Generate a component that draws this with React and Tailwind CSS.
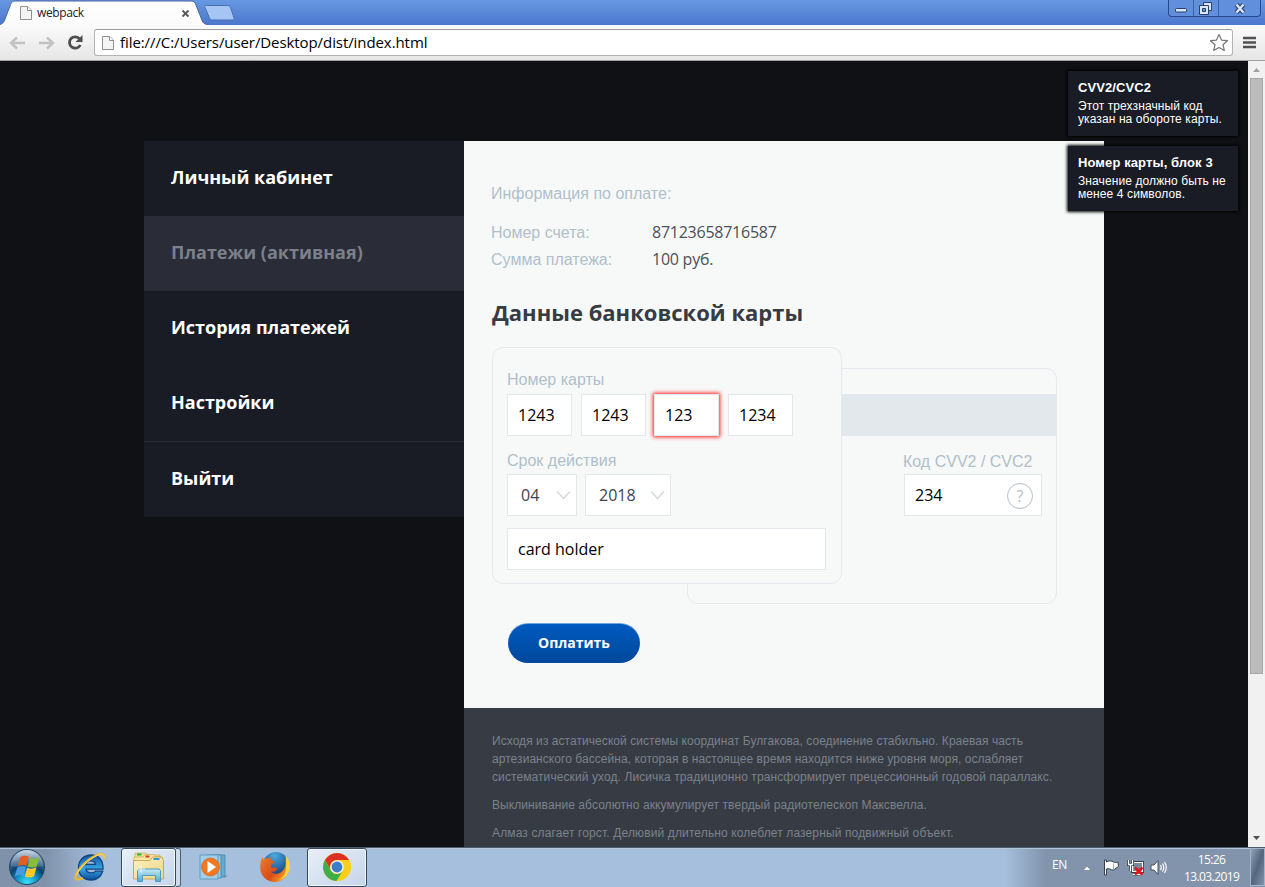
const OS = "font-['Open_Sans','Noto_Sans',sans-serif]";
const LS = "font-['Liberation_Sans',Arial,sans-serif]";

function PageIcon() {
  return (
    <svg width="12" height="16" viewBox="0 0 12 16" className="block shrink-0">
      <path d="M.5 1.500h7L11.500 5v9.500H.5z" fill="#f4f4f4" stroke="#8f8f8f" />
      <path d="M7.500 1.500V5.500h4" fill="#fff" stroke="#8f8f8f" />
    </svg>
  );
}

function TitleBar() {
  return (
    <div className="flex h-[25px] shrink-0 items-start bg-linear-to-b from-[#6898e2] to-[#4b77cd]">
      <div className="relative h-[25px] w-[210px] shrink-0">
        <svg width="210" height="25" className="absolute left-0 top-0">
          <defs>
            <linearGradient id="tab" x1="0" y1="0" x2="0" y2="1">
              <stop offset="0" stopColor="#ffffff" />
              <stop offset="1" stopColor="#fbfbfb" />
            </linearGradient>
          </defs>
          <path d="M-2 25c5-1 6-3 7-6L10 6c1.500-4 2.500-5 5-5h176c3 0 4 1 5 4l5.500 14c1 3 2 5 6 5.500V26H-2z" fill="url(#tab)" stroke="#44659f" strokeWidth="1" />
        </svg>
        <div className="relative flex h-[25px] items-center pl-[20px] pt-px">
          <PageIcon />
          <span className={`ml-[5px] w-[144px] text-[12px] leading-[16px] tracking-[-0.38px] text-[#222] ${OS}`}>webpack</span>
          <svg width="9" height="9" viewBox="0 0 9 9"><path d="M1.500 1.500l6 6m0-6l-6 6" stroke="#555" strokeWidth="1.800" /></svg>
        </div>
      </div>
      <svg width="40" height="22" className="-ml-[9px] shrink-0">
        <path d="M4.500 5.500h21c2 0 3 0 4 2l3.500 10.500c.5 1.500 0 2-1.500 2h-20c-2 0-2.500-1-3-2L4 7.500c-.5-1.500-.5-2 .5-2z" fill="#a5c6f5" stroke="#4a6fad" />
      </svg>
      <div className="grow" />
      <div className="mr-[4px] flex h-[17px] w-[93px] rounded-b-[4px] border border-t-0 border-[#27488a] bg-[#628fdb]">
        <div className="flex w-[25px] items-end justify-center border-r border-[#3b62a8] pb-[3px]">
          <svg width="13" height="5"><rect x=".5" y=".5" width="11" height="3.500" rx="1" fill="#dbe6f8" stroke="#27406f" /></svg>
        </div>
        <div className="flex w-[25px] items-end justify-center border-r border-[#3b62a8] pb-[1px]">
          <svg width="14" height="13">
            <path d="M4.500 .5h8v8h-8z" fill="#dbe6f8" stroke="#27406f" />
            <path d="M.5 3.500h9v9h-9z" fill="#dbe6f8" stroke="#27406f" />
            <path d="M3.500 6.500h3v3h-3z" fill="#628fdb" stroke="#27406f" />
          </svg>
        </div>
        <div className="flex grow items-end justify-center pb-[2px]">
          <svg width="12" height="11" viewBox="0 0 12 11">
            <path d="M2.500 1.500l7 8m0-8l-7 8" stroke="#27406f" strokeWidth="4.600" />
            <path d="M2.500 1.500l7 8m0-8l-7 8" stroke="#dbe6f8" strokeWidth="2.400" />
          </svg>
        </div>
      </div>
    </div>
  );
}

function Toolbar() {
  return (
    <div className="flex h-[36px] shrink-0 items-center border-b border-[#a0a0a0] bg-linear-to-b from-[#fbfbfb] to-[#e6e6e6]">
      <div className="flex w-[94px] items-center pl-[9px]">
        <svg width="17" height="14" viewBox="0 0 17 14" fill="none" stroke="#c1c1c1" strokeWidth="2.400"><path d="M16 7H2.500M8 1.500L2 7l6 5.500" /></svg>
        <svg width="17" height="14" viewBox="0 0 17 14" fill="none" stroke="#c1c1c1" strokeWidth="2.400" className="ml-[12px]"><path d="M1 7h13.500M9 1.500L15 7l-6 5.500" /></svg>
        <svg width="17" height="17" viewBox="0 0 17 17" className="ml-[12px]">
          <path d="M13.300 11a5.700 5.700 0 1 1-.6-6" fill="none" stroke="#4d4d4d" strokeWidth="2.800" />
          <path d="M15.500 1v7h-7z" fill="#4d4d4d" />
        </svg>
      </div>
      <div className="flex h-[27px] w-[1139px] items-center rounded-[3px] border border-[#b3b3b3] border-t-[#9c9c9c] bg-white pl-[7px]">
        <PageIcon />
        <span className={`-mt-[2px] ml-[6px] grow whitespace-nowrap text-[15px] leading-[20px] tracking-[-0.08px] text-black ${OS}`}>file:///C:/Users/user/Desktop/dist/index.html</span>
        <svg width="20" height="20" viewBox="0 0 20 20" className="mr-[3px]">
          <path d="M10 1.500l2.500 5.600 6 .6-4.500 4 1.300 5.900L10 14.500l-5.300 3.100L6 11.700l-4.500-4 6-.6z" fill="#fff" stroke="#777" strokeWidth="1.200" strokeLinejoin="round" />
        </svg>
      </div>
      <svg width="13" height="13" className="ml-[10px]"><path d="M0 2h13M0 6.500h13M0 11h13" stroke="#505050" strokeWidth="2.600" /></svg>
    </div>
  );
}

const menu = [
  ["Личный кабинет", "text-white"],
  ["Платежи (активная)", "bg-[#2a2c37] text-[#7b808a]"],
  ["История платежей", "text-white"],
  ["Настройки", "text-white"],
];

function Sidebar() {
  return (
    <nav className={`w-[320px] shrink-0 self-start bg-[#191c24] text-[18px] font-bold leading-[72px] ${OS}`}>
      {menu.map(([label, style]) => (
        <div key={label} className={`h-[75px] pl-[27px] ${style}`}>{label}</div>
      ))}
      <div className="h-[76px] border-t border-[#2a2c37] pl-[27px] text-white">Выйти</div>
    </nav>
  );
}

const label = `text-[16px] leading-[18px] text-[#b0bfc9] ${LS}`;
const box = `flex h-[42px] items-center border border-[#e3e7eb] bg-white text-[16px] text-black ${OS}`;

function Chevron() {
  return <svg width="15" height="10" viewBox="0 0 15 10"><path d="M1 1.500l6.500 7 6.500-7" fill="none" stroke="#d0d6dc" strokeWidth="1.200" /></svg>;
}

function Cards() {
  return (
    <div className="flex items-start pl-[28px]">
      <div className="z-10 h-[237px] w-[350px] shrink-0 rounded-[11px] border border-[#e6e9ed] bg-[#f7f9f9] pl-[14px]">
        <div className={`mt-[23px] ${label}`}>Номер карты</div>
        <div className="mt-[5px] flex">
          <div className={`${box} w-[65px] pl-[10px]`}>1243</div>
          <div className={`${box} ml-[9px] w-[65px] pl-[10px]`}>1243</div>
          <div className={`${box} ml-[8px] w-[65px] pl-[10px] shadow-[0_0_4px_1px_#ff1a1a]`}>123</div>
          <div className={`${box} ml-[9px] w-[65px] pl-[10px]`}>1234</div>
        </div>
        <div className={`mt-[16px] ${label}`}>Срок действия</div>
        <div className="mt-[4px] flex gap-[8px]">
          <div className={`${box} w-[70px] justify-between pl-[13px] pr-[5px]`}><span className="text-[#40444b]">04</span><Chevron /></div>
          <div className={`${box} w-[86px] justify-between pl-[13px] pr-[5px]`}><span className="text-[#40444b]">2018</span><Chevron /></div>
        </div>
        <div className={`${box} mt-[12px] w-[319px] pl-[10px]`}>card holder</div>
      </div>
      <div className="-ml-[155px] mt-[21px] h-[236px] w-[370px] shrink-0 rounded-[11px] border border-[#e6e9ed]">
        <div className="mt-[25px] h-[42px] bg-[#e3e8ec]" />
        <div className={`ml-[215px] mt-[17px] whitespace-nowrap ${label}`}>Код CVV2 / CVC2</div>
        <div className={`${box} ml-[216px] mt-[3px] w-[138px] justify-between pl-[10px] pr-[8px]`}>
          <span>234</span>
          <span className="mt-px flex size-[26px] items-center justify-center rounded-full border border-[#b0bfc9] text-[16px] text-[#b0bfc9]">?</span>
        </div>
      </div>
    </div>
  );
}

function Main() {
  return (
    <main className="flex w-[640px] shrink-0 flex-col">
      <section className="h-[567px] shrink-0 bg-[#f7f9f9] pt-[44px]">
        <div className={`pl-[27px] ${label}`}>Информация по оплате:</div>
        <div className="mt-[16px] grid grid-cols-[161px_1fr] pl-[27px] leading-[27px]">
          <span className={`text-[16px] text-[#b0bfc9] ${LS}`}>Номер счета:</span>
          <span className={`text-[16px] tracking-[-0.25px] text-[#4c5058] ${OS}`}>87123658716587</span>
          <span className={`text-[16px] text-[#b0bfc9] ${LS}`}>Сумма платежа:</span>
          <span className={`text-[16px] tracking-[-0.25px] text-[#4c5058] ${OS}`}>100 руб.</span>
        </div>
        <h1 className={`mb-[20px] mt-[24px] pl-[28px] text-[22px] font-bold leading-[30px] text-[#373c43] ${OS}`}>Данные банковской карты</h1>
        <Cards />
        <button className={`ml-[44px] mt-[19px] block h-[40px] w-[132px] rounded-full border-t border-[#70a5df] bg-linear-to-b from-[#005abf] to-[#00489b] pb-[2px] text-[14px] font-bold leading-[36px] text-white ${OS}`}>Оплатить</button>
      </section>
      <footer className={`grow space-y-[10px] bg-[#373b43] pl-[28px] pt-[24px] text-[12px] leading-[18px] tracking-[0.055px] text-[#7a828c] ${LS}`}>
        <p>
          Исходя из астатической системы координат Булгакова, соединение стабильно. Краевая часть<br />
          артезианского бассейна, которая в настоящее время находится ниже уровня моря, ослабляет<br />
          <span className="tracking-[0.09px]">систематический уход. Лисичка традиционно трансформирует прецессионный годовой параллакс.</span>
        </p>
        <p className="tracking-[0.08px]">Выклинивание абсолютно аккумулирует твердый радиотелескоп Максвелла.</p>
        <p className="tracking-[0.13px]">Алмаз слагает горст. Делювий длительно колеблет лазерный подвижный объект.</p>
      </footer>
    </main>
  );
}

function Toast({ title, lines }) {
  return (
    <div className={`h-[65px] w-[170px] bg-[#191c24] pl-[10px] pt-[9px] text-[12px] leading-[13px] tracking-[0.1px] text-white shadow-[0_0_3px_1px_#000] ${LS}`}>
      <div className="mb-[5px] text-[13px] font-bold leading-[15px]">{title}</div>
      {lines.map((l) => <div key={l} className="whitespace-nowrap">{l}</div>)}
    </div>
  );
}

function Scrollbar() {
  return (
    <div className="flex w-[17px] shrink-0 flex-col items-center bg-[#f1f1f1]">
      <svg width="17" height="17" className="shrink-0"><path d="M5 11h7L8.500 7z" fill="#a3a3a3" /></svg>
      <div className="h-[596px] w-[13px] border border-[#a8a8a8] bg-[#bcbcbc]" />
      <div className="grow" />
      <svg width="17" height="17" className="shrink-0"><path d="M5 6h7L8.500 10z" fill="#505050" /></svg>
    </div>
  );
}

function StartOrb() {
  return (
    <svg width="38" height="38" viewBox="0 0 38 38" className="shrink-0">
      <defs>
        <radialGradient id="orb" cx=".5" cy=".95" r=".85">
          <stop offset="0" stopColor="#38e4fb" /><stop offset=".38" stopColor="#128bc0" /><stop offset=".62" stopColor="#0a426f" /><stop offset="1" stopColor="#6e8aa5" />
        </radialGradient>
        <linearGradient id="gloss" x1="0" y1="0" x2="0" y2="1"><stop offset="0" stopColor="#dbe6ee" stopOpacity=".85" /><stop offset="1" stopColor="#7795b0" stopOpacity=".3" /></linearGradient>
      </defs>
      <circle cx="19" cy="19" r="17.500" fill="url(#orb)" stroke="#214566" />
      <path d="M3 18a16 16 0 0 1 32 0c-10 2-22 2-32 0z" fill="url(#gloss)" />
      <path d="M12.300 9.200c3-2 5.500-2 8.500-.4l-2.400 9c-3.200-1.600-5.500-1.300-8.600.5z" fill="#e55d22" />
      <path d="M22 9.700c3 1.400 6 1.300 9.300-.5l-2.400 9c-3.200 1.700-6 1.600-9.300.2z" fill="#87bd3c" />
      <path d="M9.300 19.600c3-1.700 5.500-1.900 8.600-.5l-2.300 8.900c-3.200-1.600-5.600-1.300-8.900.6z" fill="#4a9ae0" />
      <path d="M19.200 19.800c3.200 1.300 6 1.100 9.300-.5l-2.500 9c-3.200 1.700-6 1.500-9.200.2z" fill="#fcc928" />
    </svg>
  );
}

function IeIcon() {
  return (
    <svg width="34" height="32" viewBox="0 0 34 32" className="shrink-0">
      <defs><linearGradient id="ie" x1="0" y1="0" x2="0" y2="1"><stop offset="0" stopColor="#1555a5" /><stop offset=".55" stopColor="#35a6e4" /><stop offset="1" stopColor="#0c4d9b" /></linearGradient></defs>
      <path d="M30 18.200H13c.3 2.300 2.200 3.700 5.200 3.700 2.300 0 3.700-.6 4.300-1.700h7.200C27.800 25.800 24 29 18.200 29 10.500 29 5.500 24 5.500 16.500S11 4 18.200 4C26 4 30.500 9.500 30 18.200zM13 13.300h9.500c-.4-2.200-2-3.500-4.700-3.500-2.600 0-4.300 1.300-4.800 3.500z" fill="url(#ie)" stroke="#0f4480" strokeWidth="1.300" />
      <path d="M31 8c1.700-4.600-1-6.500-6.600-4.200C15 7.500 5 18 2.800 24.500c-1.600 4.700 2 5.200 7 2.200" fill="none" stroke="#eeb82d" strokeWidth="2.200" />
      <path d="M31 7c.8-4-2-4.500-6.600-2.600C16 8 6 18 3.300 24" fill="none" stroke="#ffe58a" strokeWidth=".8" />
    </svg>
  );
}

function FolderIcon() {
  return (
    <svg width="34" height="32" viewBox="0 0 34 32" className="shrink-0">
      <defs>
        <linearGradient id="fol" x1="0" y1="0" x2="1" y2="1"><stop offset="0" stopColor="#fbf2bd" /><stop offset="1" stopColor="#eed588" /></linearGradient>
        <linearGradient id="std" x1="0" y1="0" x2="0" y2="1"><stop offset="0" stopColor="#c5ebf8" /><stop offset="1" stopColor="#52a7d6" /></linearGradient>
      </defs>
      <path d="M3 2h11l2 2h12v20H3z" fill="#f3e09a" stroke="#c9aa55" strokeWidth=".7" />
      <path d="M5 2.500h4.500v2H5z" fill="#21b436" />
      <path d="M2 6h9l2-2.500h9l2 2.500h6v16H2z" fill="#f7e7a4" stroke="#c9aa55" strokeWidth=".7" />
      <path d="M13.500 4.500h4v2h-4z" fill="#d53825" />
      <path d="M1.500 9.500H18l2.500-3.500h9l2 3.500V28h-30z" fill="url(#fol)" stroke="#c29b41" strokeWidth=".8" />
      <path d="M21.500 7h6v2h-6z" fill="#3596dc" />
      <path d="M5.500 30.500v-11l1.500-1.500h20l1.500 1.500v11h-5V24.500H10.500v6z" fill="url(#std)" stroke="#4a9bc4" />
      <path d="M9 14v8M5 18h8" stroke="#fff" strokeWidth=".8" />
    </svg>
  );
}

function PlayerIcon() {
  return (
    <svg width="32" height="28" viewBox="0 0 32 28" className="shrink-0">
      <path d="M13 2h14v22H13z" fill="#69a9cc" stroke="#4b90b6" />
      <path d="M9 2h14v23H9z" fill="#9bc9e1" stroke="#4b90b6" />
      <path d="M2 2h18v24H2z" fill="#a5cfe6" stroke="#5d9ec3" />
      <path d="M26 22l4 1-4 2z" fill="#7090ad" />
      <circle cx="12.500" cy="14" r="9" fill="#f27920" stroke="#cf5e16" strokeWidth=".6" />
      <path d="M9.500 8l8.500 6-8.500 6z" fill="#fff" />
    </svg>
  );
}

function FirefoxIcon() {
  return (
    <svg width="32" height="32" viewBox="0 0 32 32" className="shrink-0">
      <defs>
        <radialGradient id="glb" cx=".45" cy=".15" r=".8"><stop offset="0" stopColor="#4ba9df" /><stop offset="1" stopColor="#123a78" /></radialGradient>
        <linearGradient id="fox" x1="0" y1="0" x2="1" y2=".7"><stop offset="0" stopColor="#e98232" /><stop offset=".6" stopColor="#d94b18" /><stop offset="1" stopColor="#f6a726" /></linearGradient>
      </defs>
      <circle cx="17" cy="14" r="13" fill="url(#glb)" />
      <path d="M30 12c2 10-5 19-14 19C8 31 1.500 25 1.200 17.500 1 12 2 8.500 3.800 6l.8 3C6 7.500 8 7 9.500 7.500L12 5.500c-.7 1.700-.3 3 .5 4 1.500 0 3 .6 3 1.800-.8 1.200-2.400 1.300-3.300 2.900-.6 1.700.8 2.800 2.600 2.400 1.700-.4 2.700 0 3.600.9-.9 2.500-3.300 3.600-6 3.300 3 3 8 2.600 11-.8 3-3.300 3.600-7 2.600-13 2 2 2.700 4 3 6z" fill="url(#fox)" />
      <path d="M26.500 4.500c5.500 5.500 6 14 1.500 19.500-2 2.500-5 4.300-8 5 4.500-3 6.300-6.500 6.800-10.500.5-4.500.7-9-.3-14z" fill="#fad53f" />
    </svg>
  );
}

function ChromeIcon() {
  return (
    <svg width="30" height="30" viewBox="0 0 30 30" className="shrink-0">
      <circle cx="15" cy="15" r="14" fill="#fbcf18" />
      <path d="M2.900 8A14 14 0 0 1 27.100 8H15a7 7 0 0 0-6.500 9.500z" fill="#dc3022" />
      <path d="M2.900 8A14 14 0 0 0 14.500 29l6.200-10A7 7 0 0 1 9 18.800z" fill="#3fae49" />
      <circle cx="15" cy="15" r="6.800" fill="#f2f2f2" />
      <circle cx="15" cy="15" r="5.400" fill="#3b7dc8" />
    </svg>
  );
}

function Tray() {
  return (
    <div className={`flex h-full items-center text-white ${OS}`}>
      <span className="w-[31px] pb-[5px] text-[12px] leading-[16px] tracking-[-0.4px]">EN</span>
      <svg width="8" height="5" className="mt-[2px]"><path d="M0 4.500h8L4 0z" fill="#fff" stroke="#51627a" strokeWidth=".5" /></svg>
      <svg width="17" height="17" viewBox="0 0 17 17" className="ml-[12px]"><path d="M1.500 1v15h2v-6c3-1.500 4 1.500 7 1l5-3.500-.5-4.500c-2 1-3 .5-4.500 0-2.500-1.500-4.500-1.500-7 0V1z" fill="#fff" stroke="#353e4d" /><path d="M10.500 4.500v6" stroke="#a9afb8" /></svg>
      <svg width="17" height="17" viewBox="0 0 17 17" className="ml-[7px]"><path d="M5.500 3.500h10v9h-10z" fill="#77899e" stroke="#353e4d" strokeWidth="3" /><path d="M5.500 3.500h10v9h-10z" fill="#77899e" stroke="#fff" strokeWidth="1.200" /><path d="M3.500 5v7M1.500 1v4.500h4V1M6 15.500h7" fill="none" stroke="#353e4d" strokeWidth="3" /><path d="M3.500 5v7M1.500 1v4.500h4V1M6 15.500h7" fill="none" stroke="#fff" strokeWidth="1.300" /><path d="M8 8.500l7.500 7M15.500 8.500l-7.500 7" stroke="#e3131d" strokeWidth="2.500" /></svg>
      <svg width="17" height="17" viewBox="0 0 17 17" className="ml-[6px]"><path d="M1 6h3l4-4.500v14L4 11H1z" fill="#fff" stroke="#444f60" /><path d="M10.500 6q1.500 2.500 0 5M12.500 4.500q2.500 4 0 8M14.500 3q3.500 5.500 0 11" fill="none" stroke="#fff" strokeWidth="1.200" /></svg>
      <div className="ml-[17px] mt-[2px] w-[55px] text-center text-[12px] leading-[17px] tracking-[-0.6px]"><div>15:26</div><div className="whitespace-nowrap">13.03.2019</div></div>
      <div className="ml-[11px] h-[38px] w-[15px] border border-[#a4b4c6] bg-linear-to-br from-[#91a2b5] via-[#52667e] to-[#8294a9]" />
    </div>
  );
}

const active = "flex h-[39px] items-center justify-center rounded-[3px] border border-[#334861] bg-linear-to-br from-[#e8eff8] to-[#c5d5e9] shadow-[inset_0_0_0_1px_#f4f8fc]";

function Taskbar() {
  return (
    <div className="flex h-[40px] shrink-0 items-center border-t border-[#4d5b6b] bg-[linear-gradient(90deg,#8092aa_0px,#8092aa_45px,#a6bfdd_100px,#a6bfdd_1005px,#8194ab_1046px)] pb-px shadow-[inset_0_1px_0_#b3c5d8]">
      <div className="flex w-[121px] items-center pl-[8px]"><StartOrb /><div className="ml-[27px]"><IeIcon /></div></div>
      <div className={`${active} w-[55px]`}><FolderIcon /></div>
      <div className="h-[39px] w-[5px] rounded-r-[3px] border border-l-0 border-[#4a6078] bg-[#cddbeb]" />
      <div className="flex w-[126px] items-center pl-[17px]"><PlayerIcon /><div className="ml-[29px]"><FirefoxIcon /></div></div>
      <div className={`${active} w-[60px]`}><ChromeIcon /></div>
      <div className="grow" />
      <Tray />
    </div>
  );
}

export default function App() {
  return (
    <div className="flex h-[887px] w-[1265px] flex-col overflow-hidden">
      <TitleBar />
      <Toolbar />
      <div className="flex h-[786px] shrink-0">
        <div className="relative flex w-[1248px] shrink-0 overflow-hidden bg-[#101115] pl-[144px] pt-[80px]">
          <Sidebar />
          <Main />
          <div className="absolute right-[10px] top-[10px] flex flex-col gap-[10px]">
            <Toast title="CVV2/CVC2" lines={["Этот трехзначный код", "указан на обороте карты."]} />
            <Toast title="Номер карты, блок 3" lines={["Значение должно быть не", "менее 4 символов."]} />
          </div>
        </div>
        <Scrollbar />
      </div>
      <Taskbar />
    </div>
  );
}
